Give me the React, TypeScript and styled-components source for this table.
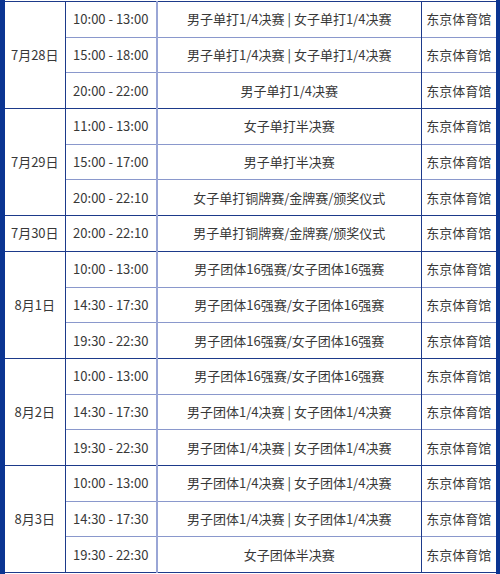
import React from 'react'
import styled, { createGlobalStyle, css } from 'styled-components'

const GlobalStyle = createGlobalStyle`
	html, body {
		margin: 0;
		padding: 0;
		background: #ffffff;
		overflow: hidden;
	}
	body {
		font-family: "Noto Sans CJK SC", "Noto Sans", sans-serif;
	}
`

type Slot = { time: string; event: string; venue: string }
type Day = { date: string; slots: Slot[] }

const VENUE = '东京体育馆'

const schedule: Day[] = [
	{
		date: '7月28日',
		slots: [
			{ time: '10:00 - 13:00', event: '男子单打1/4决赛 | 女子单打1/4决赛', venue: VENUE },
			{ time: '15:00 - 18:00', event: '男子单打1/4决赛 | 女子单打1/4决赛', venue: VENUE },
			{ time: '20:00 - 22:00', event: '男子单打1/4决赛', venue: VENUE },
		],
	},
	{
		date: '7月29日',
		slots: [
			{ time: '11:00 - 13:00', event: '女子单打半决赛', venue: VENUE },
			{ time: '15:00 - 17:00', event: '男子单打半决赛', venue: VENUE },
			{ time: '20:00 - 22:10', event: '女子单打铜牌赛/金牌赛/颁奖仪式', venue: VENUE },
		],
	},
	{
		date: '7月30日',
		slots: [{ time: '20:00 - 22:10', event: '男子单打铜牌赛/金牌赛/颁奖仪式', venue: VENUE }],
	},
	{
		date: '8月1日',
		slots: [
			{ time: '10:00 - 13:00', event: '男子团体16强赛/女子团体16强赛', venue: VENUE },
			{ time: '14:30 - 17:30', event: '男子团体16强赛/女子团体16强赛', venue: VENUE },
			{ time: '19:30 - 22:30', event: '男子团体16强赛/女子团体16强赛', venue: VENUE },
		],
	},
	{
		date: '8月2日',
		slots: [
			{ time: '10:00 - 13:00', event: '男子团体16强赛/女子团体16强赛', venue: VENUE },
			{ time: '14:30 - 17:30', event: '男子团体1/4决赛 | 女子团体1/4决赛', venue: VENUE },
			{ time: '19:30 - 22:30', event: '男子团体1/4决赛 | 女子团体1/4决赛', venue: VENUE },
		],
	},
	{
		date: '8月3日',
		slots: [
			{ time: '10:00 - 13:00', event: '男子团体1/4决赛 | 女子团体1/4决赛', venue: VENUE },
			{ time: '14:30 - 17:30', event: '男子团体1/4决赛 | 女子团体1/4决赛', venue: VENUE },
			{ time: '19:30 - 22:30', event: '女子团体半决赛', venue: VENUE },
		],
	},
]

function App() {
	return (
		<>
			<GlobalStyle />
			<Frame>
				<Table>
					<colgroup>
						<Col w={60} />
						<Col w={92} />
						<Col w={264} />
						<Col w={75} />
					</colgroup>
					<tbody>
						{schedule.map((day) =>
							day.slots.map((slot, i) => (
								<Row key={day.date + slot.time} first={i === 0}>
									{i === 0 && <DateCell rowSpan={day.slots.length}>{day.date}</DateCell>}
									<TimeCell>{slot.time}</TimeCell>
									<EventCell>{slot.event}</EventCell>
									<VenueCell>{slot.venue}</VenueCell>
								</Row>
							))
						)}
					</tbody>
				</Table>
			</Frame>
		</>
	)
}

const Frame = styled.div`
	width: 500px;
	height: 574px;
	box-sizing: border-box;
	padding-top: 1px;
	border-left: 5px solid #0b3592;
	border-right: 4px solid #0b3592;
	overflow: hidden;
`

const Table = styled.table`
	width: 491px;
	border-collapse: collapse;
	table-layout: fixed;
	color: #383838;
	font-size: 13px;
	border-bottom: 1px solid #1d3a8a;
`

const Col = styled('col')<{ w: number }>`
	width: ${(props) => props.w}px;
`

const Row = styled('tr')<{ first: boolean }>`
	height: 35.7px;

	td {
		border-top: 1px solid #8a98cc;
	}

	${(props) =>
		props.first &&
		css`
			td {
				border-top: 1px solid #1d3a8a;
			}
		`}
`

const Cell = styled.td`
	padding: 0;
	text-align: center;
	vertical-align: middle;
	white-space: nowrap;
	line-height: 18px;
`

const DateCell = styled(Cell)`
	border-right: 1px solid #1d3a8a;
`

const TimeCell = styled(Cell)`
	border-right: 2px solid #9aa6d6;
`

const EventCell = styled(Cell)`
	border-right: 1px solid #1d3a8a;
`

const VenueCell = styled(Cell)``

export default App
